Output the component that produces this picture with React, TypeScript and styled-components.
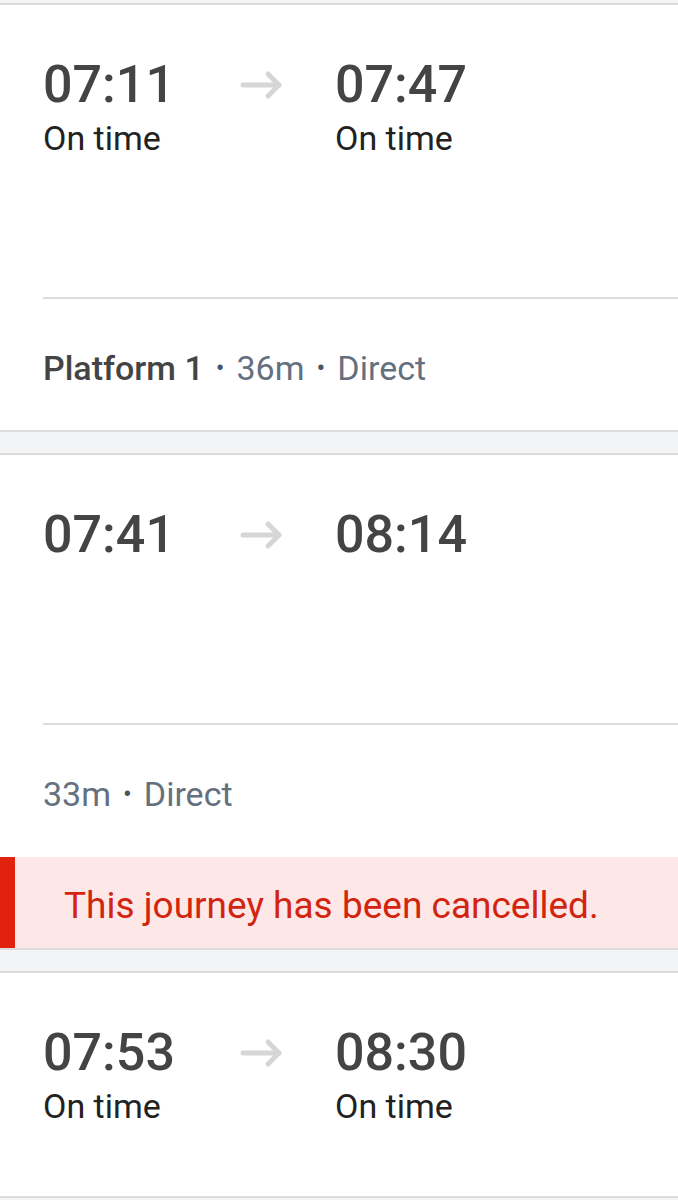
import styled, { createGlobalStyle } from 'styled-components';

const GlobalStyle = createGlobalStyle`
  * {
    box-sizing: border-box;
  }
  body {
    margin: 0;
    background: #f3f4f6;
    font-family: Roboto, 'Noto Sans', Arial, sans-serif;
  }
`;

const Page = styled.div`
  display: flex;
  flex-direction: column;
  gap: 21px;
  padding-top: 3px;
  background: #f3f4f6;
  min-height: 1200px;
`;

const Card = styled.div`
  background: #fff;
  border-top: 2px solid #dcdcdc;
  border-bottom: 2px solid #dcdcdc;
`;

const TopSection = styled.div<{ $height: number }>`
  height: ${({ $height }) => $height}px;
  padding: 50px 0 0 43px;
  display: flex;
  align-items: flex-start;
`;

const TimeColumn = styled.div<{ $width: number }>`
  width: ${({ $width }) => $width}px;
  display: flex;
  flex-direction: column;
`;

const Time = styled.div`
  font-size: 52px;
  line-height: 60px;
  font-weight: 500;
  color: #444;
`;

const Status = styled.div`
  margin-top: 3px;
  font-size: 34px;
  line-height: 40px;
  color: #222;
`;

const ArrowBox = styled.div`
  width: 95px;
  height: 60px;
  display: flex;
  align-items: center;
`;

const Divider = styled.div`
  margin-left: 43px;
  height: 2px;
  background: #dcdcdc;
`;

const Meta = styled.div`
  padding: 49px 43px 42px;
  font-size: 34px;
  line-height: 40px;
  color: #65707f;
  white-space: nowrap;
`;

const Platform = styled.span`
  font-weight: 500;
  color: #444;
`;

const Dot = styled.span`
  display: inline-block;
  margin: 0 12px;
  color: #4a5362;
  font-size: 26px;
  vertical-align: 3px;
`;

const Banner = styled.div`
  display: flex;
  margin-top: 1px;
  background: #fde7e7;
`;

const BannerBar = styled.div`
  width: 15px;
  background: #e1220c;
`;

const BannerText = styled.div`
  padding: 27px 0 21px 49px;
  font-size: 37px;
  line-height: 43px;
  color: #d2240f;
`;

const Arrow = () => (
  <svg width="44" height="30" viewBox="0 0 44 30">
    <g fill="none" stroke="#d6d6d6" strokeWidth="5" strokeLinecap="round" strokeLinejoin="round">
      <line x1="3" y1="15" x2="39" y2="15" />
      <polyline points="28,4 39,15 28,26" />
    </g>
  </svg>
);

type Journey = {
  dep: string;
  arr: string;
  depStatus?: string;
  arrStatus?: string;
  platform?: string;
  meta?: string[];
  topHeight: number;
  cancelled?: boolean;
};

const journeys: Journey[] = [
  { dep: '07:11', arr: '07:47', depStatus: 'On time', arrStatus: 'On time', platform: 'Platform 1', meta: ['36m', 'Direct'], topHeight: 292 },
  { dep: '07:41', arr: '08:14', meta: ['33m', 'Direct'], topHeight: 268, cancelled: true },
  { dep: '07:53', arr: '08:30', depStatus: 'On time', arrStatus: 'On time', topHeight: 223 },
];

const JourneyCard = ({ j }: { j: Journey }) => (
  <Card>
    <TopSection $height={j.topHeight}>
      <TimeColumn $width={197}>
        <Time>{j.dep}</Time>
        {j.depStatus && <Status>{j.depStatus}</Status>}
      </TimeColumn>
      <ArrowBox>
        <Arrow />
      </ArrowBox>
      <TimeColumn $width={200}>
        <Time>{j.arr}</Time>
        {j.arrStatus && <Status>{j.arrStatus}</Status>}
      </TimeColumn>
    </TopSection>
    {j.meta && (
      <>
        <Divider />
        <Meta>
          {j.platform && (
            <>
              <Platform>{j.platform}</Platform>
              <Dot>•</Dot>
            </>
          )}
          {j.meta.map((m, i) => (
            <span key={m}>
              {i > 0 && <Dot>•</Dot>}
              {m}
            </span>
          ))}
        </Meta>
      </>
    )}
    {j.cancelled && (
      <Banner>
        <BannerBar />
        <BannerText>This journey has been cancelled.</BannerText>
      </Banner>
    )}
  </Card>
);

export default function App() {
  return (
    <>
      <GlobalStyle />
      <Page>
        {journeys.map((j) => (
          <JourneyCard key={j.dep} j={j} />
        ))}
      </Page>
    </>
  );
}
